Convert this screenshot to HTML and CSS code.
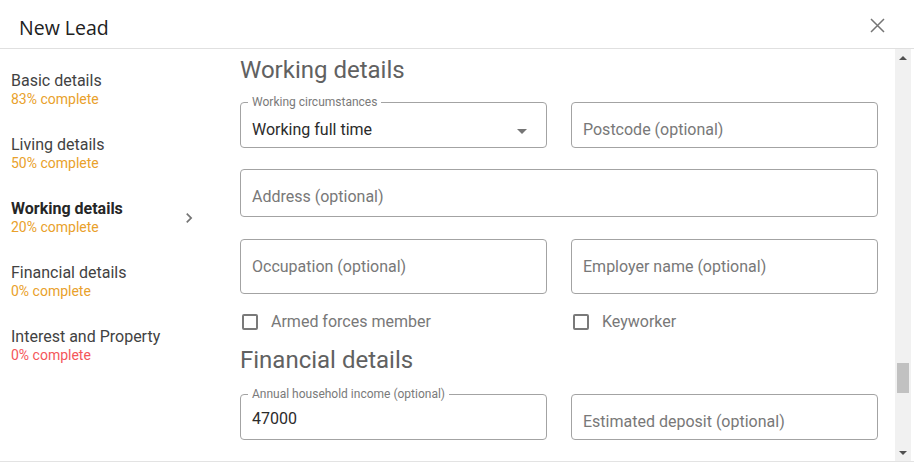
FILE: index.html
```html
<!DOCTYPE html>
<html lang="en">
<head>
<meta charset="utf-8">
<title>New Lead</title>
<link rel="stylesheet" href="styles.css">
</head>
<body>
<div class="dialog">
  <header class="dlg-head">
    <h1 class="dlg-title">New Lead</h1>
    <button class="close" aria-label="Close">
      <svg width="15" height="15" viewBox="0 0 15 15"><path d="M1 1L14 14M14 1L1 14" stroke="#757575" stroke-width="1.5" fill="none"/></svg>
    </button>
  </header>
  <div class="dlg-body">
    <nav class="steps">
      <div class="step">
        <div class="step-text"><div class="step-title">Basic details</div><div class="step-sub warn">83% complete</div></div>
      </div>
      <div class="step">
        <div class="step-text"><div class="step-title">Living details</div><div class="step-sub warn">50% complete</div></div>
      </div>
      <div class="step active">
        <div class="step-text"><div class="step-title">Working details</div><div class="step-sub warn">20% complete</div></div>
        <svg class="chev" width="20" height="20" viewBox="0 0 24 24"><path d="M10 6L8.59 7.41 13.17 12l-4.58 4.59L10 18l6-6z" fill="#757575"/></svg>
      </div>
      <div class="step">
        <div class="step-text"><div class="step-title">Financial details</div><div class="step-sub warn">0% complete</div></div>
      </div>
      <div class="step">
        <div class="step-text"><div class="step-title">Interest and Property</div><div class="step-sub danger">0% complete</div></div>
      </div>
    </nav>
    <main class="form">
      <h2 class="section-title">Working details</h2>
      <div class="row two r-select">
        <div class="field select">
          <span class="float-label">Working circumstances</span>
          <span class="value">Working full time</span>
          <svg class="drop" width="24" height="24" viewBox="0 0 24 24"><path d="M7 10l5 5 5-5z" fill="#757575"/></svg>
        </div>
        <div class="field"><span class="ph">Postcode (optional)</span></div>
      </div>
      <div class="row r-address">
        <div class="field tall1"><span class="ph">Address (optional)</span></div>
      </div>
      <div class="row two r-occ">
        <div class="field tall2"><span class="ph">Occupation (optional)</span></div>
        <div class="field tall2"><span class="ph">Employer name (optional)</span></div>
      </div>
      <div class="row two r-check">
        <label class="check"><span class="box"></span><span class="check-label">Armed forces member</span></label>
        <label class="check"><span class="box"></span><span class="check-label">Keyworker</span></label>
      </div>
      <h2 class="section-title s2">Financial details</h2>
      <div class="row two r-fin">
        <div class="field filled">
          <span class="float-label">Annual household income (optional)</span>
          <span class="value">47000</span>
        </div>
        <div class="field"><span class="ph">Estimated deposit (optional)</span></div>
      </div>
    </main>
    <div class="scrollbar">
      <div class="sb-btn"><span class="tri up"></span></div>
      <div class="sb-track">
        <div class="sb-space"></div>
        <div class="sb-thumb"></div>
      </div>
      <div class="sb-btn"><span class="tri down"></span></div>
    </div>
  </div>
</div>
</body>
</html>
```

FILE: styles.css
```css
* { box-sizing: border-box; }
html, body { margin: 0; padding: 0; background: #fff; }
body { font-family: Roboto, "Liberation Sans", sans-serif; color: #333; }

.dialog { width: 914px; height: 466px; background: #fff; overflow: hidden; }

.dlg-head {
  height: 49px;
  border-bottom: 1px solid #e0e0e0;
  display: flex;
  align-items: center;
  justify-content: space-between;
  padding: 0 29px 0 19px;
}
.dlg-title {
  margin: 0;
  font-family: "Open Sans", sans-serif;
  font-weight: 400;
  font-size: 19.5px;
  color: #212121;
  line-height: 26px;
  margin-top: 8px;
}
.close {
  border: 0; background: transparent; padding: 0; margin: 0;
  width: 15px; height: 15px; display: block; margin-top: 2px;
}
.close svg { display: block; }

.dlg-body {
  height: 413px;
  border-bottom: 1px solid #e3e3e3;
  display: flex;
}

.steps {
  width: 240px;
  flex: none;
  padding: 22px 41px 0 11px;
  display: flex;
  flex-direction: column;
  gap: 27px;
}
.step { display: flex; align-items: center; justify-content: space-between; height: 37px; }
.step-title { font-size: 16px; line-height: 20px; color: #424242; white-space: nowrap; }
.step.active .step-title { font-weight: 700; color: #262626; }
.step-sub { font-size: 14px; line-height: 17px; }
.warn { color: #e9a12b; }
.danger { color: #f4565a; }
.chev { display: block; }

.form {
  width: 638px;
  flex: none;
  margin-right: 17px;
  padding-top: 5px;
  overflow: hidden;
}
.section-title {
  margin: 0;
  font-weight: 400;
  font-size: 24px;
  line-height: 32px;
  color: #616161;
}
.row { display: grid; grid-template-columns: 1fr; }
.row.two { grid-template-columns: 307px 307px; column-gap: 24px; }
.r-select { margin-top: 16px; }
.r-address { margin-top: 21px; }
.r-occ { margin-top: 22px; }
.r-check { margin-top: 16px; height: 24px; }
.s2 { margin-top: 10px; }
.r-fin { margin-top: 18px; }

.field {
  position: relative;
  height: 46px;
  border: 1px solid #a3a3a3;
  border-radius: 4px;
  padding: 17px 12px 0 11px;
  display: flex;
  align-items: flex-start;
  font-size: 16px;
  line-height: 20px;
}
.field.select { padding-top: 16px; }
.field.select .value { padding-top: 1px; }
.field.tall1 { height: 48px; }
.field.tall2 { height: 55px; }
.field.filled { padding-top: 14px; }
.ph { color: #787878; }
.value { color: #2b2b2b; flex: 1; }
.drop { display: block; flex: none; }
.float-label {
  position: absolute;
  left: 7px;
  top: -8px;
  padding: 0 4px;
  background: #fff;
  font-size: 12px;
  line-height: 14px;
  color: #7a7a7a;
}

.check { display: flex; align-items: center; height: 24px; padding-left: 2px; }
.box {
  width: 16px; height: 16px;
  border: 2px solid #7a7a7a;
  border-radius: 2px;
  flex: none;
}
.check-label { margin-left: 13px; font-size: 16px; line-height: 24px; color: #787878; }

.scrollbar {
  width: 16px;
  flex: none;
  background: #f1f1f1;
  display: flex;
  flex-direction: column;
}
.sb-btn { height: 17px; display: flex; align-items: center; justify-content: center; flex: none; }
.tri { width: 0; height: 0; border-left: 4px solid transparent; border-right: 4px solid transparent; }
.tri.up { border-bottom: 4px solid #505050; }
.tri.down { border-top: 4px solid #505050; }
.sb-track { flex: 1; display: flex; flex-direction: column; align-items: center; }
.sb-space { height: 297px; flex: none; }
.sb-thumb { width: 12px; height: 30px; background: #c1c1c1; }
```
